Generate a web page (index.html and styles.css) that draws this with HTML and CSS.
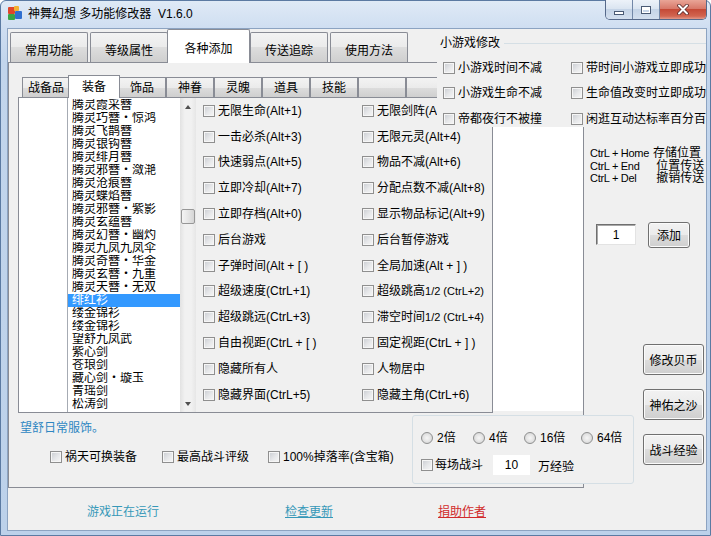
FILE: index.html
```html
<!DOCTYPE html>
<html>
<head lang="zh-CN">
    <meta charset="utf-8">
    <title>神舞幻想 多功能修改器 V1.6.0</title>
    <link rel="stylesheet" href="styles.css">
</head>
<body>
<div class="window">
    <div class="titlebar">
        <svg class="app-icon" width="16" height="16" viewBox="0 0 16 16">
            <rect x="1" y="2" width="7" height="7" rx="1" fill="#e0462a"/>
            <rect x="7" y="1" width="5" height="5" rx="1" fill="#f2b233"/>
            <rect x="8" y="6" width="7" height="8" rx="1" fill="#2f6fd0"/>
            <rect x="1" y="9" width="7" height="6" rx="1" fill="#3aa445"/>
        </svg>
        <span class="title-text">神舞幻想 多功能修改器&nbsp; V1.6.0</span>
        <div class="caption">
            <span class="cap-btn cap-min"><i></i></span>
            <span class="cap-btn cap-max"><i></i></span>
            <span class="cap-btn cap-close">
                <svg width="14" height="11" viewBox="0 0 14 11">
                    <path d="M3 1.5 L11 9.5 M11 1.5 L3 9.5" stroke="#5a2a2a" stroke-width="3.6" stroke-linecap="round"/>
                    <path d="M3 1.5 L11 9.5 M11 1.5 L3 9.5" stroke="#ffffff" stroke-width="2" stroke-linecap="round"/>
                </svg>
            </span>
        </div>
    </div>

    <div class="client">
        <div class="main">
            <div class="main-tabs">
                <div class="tab-strip">
                    <span class="tab">常用功能</span>
                    <span class="tab">等级属性</span>
                    <span class="tab on">各种添加</span>
                    <span class="tab">传送追踪</span>
                    <span class="tab">使用方法</span>
                </div>
                <div class="page">
                    <div class="page-up">
                        <div class="sub">
                            <div class="sub-strip">
                                <span class="sub-tab">战备品</span>
                                <span class="sub-tab on">装备</span>
                                <span class="sub-tab">饰品</span>
                                <span class="sub-tab">神眷</span>
                                <span class="sub-tab">灵魄</span>
                                <span class="sub-tab">道具</span>
                                <span class="sub-tab">技能</span>
                                <span class="sub-tab"></span>
                                <span class="sub-tab"></span>
                            </div>
                            <div class="sub-page">
                                <div class="blank"></div>
                                <div class="list">
                                    <div class="items">
                                        <div class="item">腾灵霞采簪</div>
                                        <div class="item">腾灵巧簪・惊鸿</div>
                                        <div class="item">腾灵飞鹊簪</div>
                                        <div class="item">腾灵银钩簪</div>
                                        <div class="item">腾灵绯月簪</div>
                                        <div class="item">腾灵邪簪・潋滟</div>
                                        <div class="item">腾灵沧痕簪</div>
                                        <div class="item">腾灵蝶焰簪</div>
                                        <div class="item">腾灵邪簪・紫影</div>
                                        <div class="item">腾灵玄蕴簪</div>
                                        <div class="item">腾灵幻簪・幽灼</div>
                                        <div class="item">腾灵九凤九凤伞</div>
                                        <div class="item">腾灵奇簪・华金</div>
                                        <div class="item">腾灵玄簪・九重</div>
                                        <div class="item">腾灵天簪・无双</div>
                                        <div class="item sel">绯红衫</div>
                                        <div class="item">缕金锦衫</div>
                                        <div class="item">缕金锦衫</div>
                                        <div class="item">望舒九凤武</div>
                                        <div class="item">紫心剑</div>
                                        <div class="item">苍琅剑</div>
                                        <div class="item">藏心剑・璇玉</div>
                                        <div class="item">青瑶剑</div>
                                        <div class="item">松涛剑</div>
                                    </div>
                                    <div class="scroll">
                                        <span class="sb-btn sb-up"></span>
                                        <span class="sb-gap"></span>
                                        <span class="thumb"></span>
                                        <span class="sb-rest"></span>
                                        <span class="sb-btn sb-down"></span>
                                    </div>
                                </div>
                                <div class="checks">
                                    <label class="chk"><span class="cb"></span>无限生命(Alt+1)</label>
                                    <label class="chk"><span class="cb"></span>无限剑阵(Alt+2)</label>
                                    <label class="chk"><span class="cb"></span>一击必杀(Alt+3)</label>
                                    <label class="chk"><span class="cb"></span>无限元灵(Alt+4)</label>
                                    <label class="chk"><span class="cb"></span>快速弱点(Alt+5)</label>
                                    <label class="chk"><span class="cb"></span>物品不减(Alt+6)</label>
                                    <label class="chk"><span class="cb"></span>立即冷却(Alt+7)</label>
                                    <label class="chk"><span class="cb"></span>分配点数不减(Alt+8)</label>
                                    <label class="chk"><span class="cb"></span>立即存档(Alt+0)</label>
                                    <label class="chk"><span class="cb"></span>显示物品标记(Alt+9)</label>
                                    <label class="chk"><span class="cb"></span>后台游戏</label>
                                    <label class="chk"><span class="cb"></span>后台暂停游戏</label>
                                    <label class="chk"><span class="cb"></span>子弹时间(Alt + [ )</label>
                                    <label class="chk"><span class="cb"></span>全局加速(Alt + ] )</label>
                                    <label class="chk"><span class="cb"></span>超级速度(CtrL+1)</label>
                                    <label class="chk"><span class="cb"></span><span>超级跳高<small>1/2 (CtrL+2)</small></span></label>
                                    <label class="chk"><span class="cb"></span>超级跳远(CtrL+3)</label>
                                    <label class="chk"><span class="cb"></span><span>滞空时间<small>1/2 (CtrL+4)</small></span></label>
                                    <label class="chk"><span class="cb"></span>自由视距(CtrL + [ )</label>
                                    <label class="chk"><span class="cb"></span>固定视距(CtrL + ] )</label>
                                    <label class="chk"><span class="cb"></span>隐藏所有人</label>
                                    <label class="chk"><span class="cb"></span>人物居中</label>
                                    <label class="chk"><span class="cb"></span>隐藏界面(CtrL+5)</label>
                                    <label class="chk"><span class="cb"></span>隐藏主角(CtrL+6)</label>
                                </div>
                            </div>
                        </div>
                        <div class="white-box"></div>
                    </div>
                    <div class="page-low">
                        <div class="note">望舒日常服饰。</div>
                        <div class="low-row">
                            <label class="chk"><span class="cb"></span>祸天可换装备</label>
                            <label class="chk"><span class="cb"></span>最高战斗评级</label>
                            <label class="chk"><span class="cb"></span>100%掉落率(含宝箱)</label>
                        </div>
                    </div>
                </div>
            </div>

            <div class="right-col">
                <div class="keys">
                    <span class="key">CtrL + Home</span><span>存储位置</span>
                    <span class="key">CtrL + End</span><span>&nbsp;位置传送</span>
                    <span class="key">CtrL + Del</span><span>&nbsp;撤销传送</span>
                </div>
                <div class="add-row">
                    <span class="num-box">1</span>
                    <span class="btn btn-add">添加</span>
                </div>
                <div class="side-btns">
                    <span class="btn">修改贝币</span>
                    <span class="btn">神佑之沙</span>
                    <span class="btn">战斗经验</span>
                </div>
            </div>
        </div>

        <div class="status">
            <span class="st-run">游戏正在运行</span>
            <span class="st-link">检查更新</span>
            <span class="st-donate">捐助作者</span>
        </div>

        <div class="mini">
            <div class="mini-title"><span>小游戏修改</span><i></i></div>
            <div class="mini-grid">
                <label class="chk"><span class="cb"></span>小游戏时间不减</label>
                <label class="chk"><span class="cb"></span>带时间小游戏立即成功</label>
                <label class="chk"><span class="cb"></span>小游戏生命不减</label>
                <label class="chk"><span class="cb"></span>生命值改变时立即成功</label>
                <label class="chk"><span class="cb"></span>帝都夜行不被撞</label>
                <label class="chk"><span class="cb"></span>闲逛互动达标率百分百</label>
            </div>
        </div>

        <div class="exp">
            <div class="radios">
                <label class="rad"><span class="rb"></span>2倍</label>
                <label class="rad"><span class="rb"></span>4倍</label>
                <label class="rad"><span class="rb"></span>16倍</label>
                <label class="rad"><span class="rb"></span>64倍</label>
            </div>
            <div class="exp-row">
                <label class="chk exp-chk"><span class="cb"></span>每场战斗</label>
                <span class="exp-num">10</span>
                <span>万经验</span>
            </div>
        </div>
    </div>
</div>
</body>
</html>
```

FILE: styles.css
```css
* {
    box-sizing: border-box;
}

body {
    margin: 0;
    width: 711px;
    height: 536px;
    overflow: hidden;
    background: #ffffff;
    font-family: "Liberation Sans", "Noto Sans CJK SC", sans-serif;
    font-size: 12px;
    color: #000;
}

.window {
    width: 711px;
    height: 536px;
    display: flex;
    flex-direction: column;
    border: 1px solid #5b7aa2;
    border-radius: 6px 6px 0 0;
    background: linear-gradient(to bottom, #dfeaf6 0, #cfdef1 27px, #c2d5ec 60px, #bcd1ea 100%);
}

/* title bar */
.titlebar {
    height: 28px;
    flex: none;
    display: flex;
    align-items: flex-start;
}

.app-icon {
    margin: 4px 0 0 6px;
    flex: none;
}

.title-text {
    margin-left: 5px;
    line-height: 26px;
    font-size: 12px;
    color: #000;
    white-space: nowrap;
}

.caption {
    margin: -1px 3px 0 auto;
    display: flex;
    height: 20px;
    border: 1px solid #56698a;
    border-top: none;
    border-radius: 0 0 5px 5px;
    overflow: hidden;
}

.cap-btn {
    width: 27px;
    display: flex;
    align-items: center;
    justify-content: center;
    border-right: 1px solid #7388a8;
    background: linear-gradient(to bottom, #edf2f9 0, #dbe5f1 45%, #c5d4e7 50%, #d3dfee 100%);
}

.cap-min i {
    width: 10px;
    height: 4px;
    margin-top: 6px;
    background: #fff;
    border: 1px solid #4a5a74;
}

.cap-max i {
    width: 10px;
    height: 8px;
    background: transparent;
    border: 1px solid #4a5a74;
    box-shadow: inset 0 0 0 1px #fff, inset 0 2px 0 1px #fff;
}

.cap-close {
    width: 46px;
    border-right: none;
    background: linear-gradient(to bottom, #e9a597 0, #d8796a 45%, #c54a37 50%, #d26550 85%, #e3998a 100%);
}

/* client area */
.client {
    flex: 1;
    margin: 0 4px 5px 7px;
    position: relative;
    display: flex;
    flex-direction: column;
    background: #f0f0f0;
    box-shadow: 0 0 0 1px #8ca3c1;
}

.main {
    height: 459px;
    display: flex;
}

.main-tabs {
    width: 576px;
    display: flex;
    flex-direction: column;
}

.tab-strip {
    height: 33px;
    display: flex;
    align-items: flex-end;
    padding-left: 2px;
}

.tab {
    flex: none;
    width: 78px;
    height: 30px;
    margin-right: 2px;
    padding-top: 3px;
    border: 1px solid #898c95;
    border-bottom: none;
    border-radius: 2px 2px 0 0;
    background: linear-gradient(to bottom, #f3f3f3 0, #ebebeb 50%, #dddddd 50%, #cfcfcf 100%);
    display: flex;
    align-items: center;
    justify-content: center;
    font-size: 12px;
}

.tab.on {
    width: 83px;
    height: 34px;
    margin: 0 0 -1px -3px;
    padding-top: 1px;
    background: #ffffff;
    position: relative;
    z-index: 1;
}

.page {
    height: 426px;
    border: 1px solid #898c95;
    background: #f0f0f0;
    display: flex;
    flex-direction: column;
}

.page-up {
    height: 350px;
    flex: none;
    display: flex;
    padding-left: 9px;
}

/* inner tabs */
.sub {
    width: 475px;
    display: flex;
    flex-direction: column;
}

.sub-strip {
    margin-top: 12px;
    height: 22px;
    display: flex;
    align-items: flex-end;
    padding-left: 4px;
}

.sub-tab {
    flex: none;
    width: 48px;
    height: 20px;
    border: 1px solid #898c95;
    border-bottom: none;
    background: linear-gradient(to bottom, #f3f3f3 0, #ebebeb 50%, #dddddd 50%, #cfcfcf 100%);
    display: flex;
    align-items: center;
    justify-content: center;
    font-size: 12px;
    line-height: 14px;
}

.sub-tab.on {
    width: 52px;
    height: 23px;
    margin: 0 -2px -1px -2px;
    background: #ffffff;
    position: relative;
    z-index: 1;
}

.sub-page {
    flex: 1;
    border: 1px solid #898c95;
    background: #f0f0f0;
    display: flex;
}

.blank {
    width: 49px;
    flex: none;
    background: #ffffff;
    border-right: 1px solid #a6abb3;
}

.list {
    width: 128px;
    flex: none;
    display: flex;
    background: #ffffff;
}

.items {
    flex: 1;
    padding-top: 1px;
    overflow: hidden;
}

.item {
    height: 13px;
    line-height: 13px;
    padding-left: 4px;
    white-space: nowrap;
    overflow: hidden;
    font-size: 12px;
}

.item.sel {
    background: #3399ff;
    color: #ffffff;
}

.scroll {
    width: 16px;
    flex: none;
    display: flex;
    flex-direction: column;
    background: linear-gradient(to right, #e2e2e2 0, #f1f1f1 30%, #f1f1f1 70%, #e6e6e6 100%);
}

.sb-btn {
    height: 17px;
    flex: none;
    display: flex;
    align-items: center;
    justify-content: center;
}

.sb-up::after {
    content: "";
    border-left: 3px solid transparent;
    border-right: 3px solid transparent;
    border-bottom: 4px solid #505050;
}

.sb-down::after {
    content: "";
    border-left: 3px solid transparent;
    border-right: 3px solid transparent;
    border-top: 4px solid #505050;
}

.sb-gap {
    height: 94px;
    flex: none;
}

.thumb {
    height: 15px;
    flex: none;
    margin: 0 1px;
    border: 1px solid #979797;
    border-radius: 2px;
    background: linear-gradient(to right, #f4f4f4 0, #e6e6e6 50%, #d5d5d5 100%);
}

.sb-rest {
    flex: 1;
}

.checks {
    flex: 1;
    display: grid;
    grid-template-columns: 159px 159px;
    grid-auto-rows: 25.8px;
    align-content: start;
    padding-left: 7px;
    overflow: hidden;
}

.chk {
    display: flex;
    align-items: center;
    gap: 3px;
    white-space: nowrap;
    line-height: 14px;
}

.chk small {
    font-size: 11px;
}

.cb {
    width: 12px;
    height: 12px;
    flex: none;
    border: 1px solid #8f8f8f;
    background: linear-gradient(135deg, #c9ccd1 0, #e7e8ea 55%, #f7f7f7 100%);
    box-shadow: inset 0 0 0 1px #f6f6f6;
}

.white-box {
    width: 90px;
    height: 284px;
    margin-top: 64px;
    background: #ffffff;
}

.page-low {
    flex: 1;
    padding: 8px 0 0 11px;
}

.note {
    line-height: 14px;
    color: #2e87c2;
}

.low-row {
    margin-top: 15px;
    padding-left: 30px;
    display: grid;
    grid-template-columns: 112px 106px auto;
}

/* right column */
.right-col {
    width: 122px;
    padding: 118px 0 0 6px;
}

.keys {
    display: grid;
    grid-template-columns: 63px auto;
    line-height: 12.5px;
    white-space: nowrap;
}

.key {
    font-size: 11px;
    letter-spacing: -0.3px;
}

.add-row {
    margin-top: 37px;
    height: 26px;
    display: flex;
    align-items: center;
    gap: 12px;
}

.num-box {
    width: 40px;
    height: 21px;
    margin-left: 6px;
    background: #ffffff;
    border: 1px solid;
    border-color: #6f6f6f #e3e3e3 #e3e3e3 #6f6f6f;
    box-shadow: inset 1px 1px 0 #a8a8a8;
    display: flex;
    align-items: center;
    justify-content: center;
}

.btn {
    display: flex;
    align-items: center;
    justify-content: center;
    border: 1px solid #707070;
    border-radius: 3px;
    background: linear-gradient(to bottom, #f2f2f2 0, #ebebeb 50%, #dddddd 50%, #cfcfcf 100%);
    box-shadow: inset 0 0 0 1px #fbfbfb;
    font-size: 12px;
}

.btn-add {
    width: 42px;
    height: 26px;
}

.side-btns {
    margin: 96px 0 0 53px;
    display: flex;
    flex-direction: column;
    gap: 14px;
}

.side-btns .btn {
    width: 61px;
    height: 31px;
}

/* status line */
.status {
    height: 42px;
    padding: 17px 0 0 79px;
    display: grid;
    grid-template-columns: 198px 153px auto;
    line-height: 14px;
}

.st-run {
    color: #3698b8;
}

.st-link {
    color: #3698b8;
    text-decoration: underline;
}

.st-donate {
    color: #d12b2b;
    text-decoration: underline;
}

/* group boxes lying over the tab controls */
.mini {
    position: absolute;
    left: 429px;
    top: 7px;
    width: 269px;
    height: 91px;
    background: #f0f0f0;
}

.mini-title {
    height: 14px;
    line-height: 14px;
    padding-left: 3px;
    display: flex;
    align-items: center;
    white-space: nowrap;
}

.mini-title i {
    flex: 1;
    margin-left: 4px;
    border-top: 1px solid #d5dfe5;
}

.mini-grid {
    margin-top: 5px;
    padding-left: 6px;
    display: grid;
    grid-template-columns: 128px auto;
    grid-auto-rows: 25.5px;
}

.exp {
    position: absolute;
    left: 404px;
    top: 386px;
    width: 222px;
    height: 69px;
    border: 1px solid #d5dfe5;
    border-radius: 3px;
    background: #f0f0f0;
    padding: 15px 0 0 8px;
}

.radios {
    display: grid;
    grid-template-columns: 52px 51px 57px auto;
    line-height: 14px;
}

.rad {
    display: flex;
    align-items: center;
    gap: 4px;
    white-space: nowrap;
}

.rb {
    width: 12px;
    height: 12px;
    flex: none;
    border: 1px solid #8e8f8f;
    border-radius: 50%;
    background: radial-gradient(circle at 50% 50%, #f6f6f6 0, #e6e6e6 45%, #cfcfcf 100%);
}

.exp-row {
    margin-top: 10px;
    height: 20px;
    display: flex;
    align-items: center;
}

.exp-chk {
    width: 72px;
    gap: 2px;
}

.exp-num {
    width: 37px;
    height: 20px;
    margin-right: 8px;
    background: #ffffff;
    display: flex;
    align-items: center;
    justify-content: center;
}
```
